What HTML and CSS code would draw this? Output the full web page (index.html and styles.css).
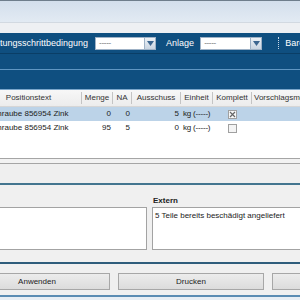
FILE: index.html
```html
<!DOCTYPE html>
<html>
<head>
<meta charset="utf-8">
<link rel="stylesheet" href="styles.css">
</head>
<body>
<div class="app">
  <div class="titlebar"></div>
  <div class="menustrip"></div>
  <div class="toolbar">
    <span class="tb-label first">Bearbeitungsschrittbedingung</span>
    <div class="combo c1"><span class="combo-text">-----</span><span class="combo-btn"><svg width="7" height="5" viewBox="0 0 7 5"><path d="M0 0h7L3.5 5z" fill="#3d6690"/></svg></span></div>
    <span class="tb-label anlage">Anlage</span>
    <div class="combo c2"><span class="combo-text">-----</span><span class="combo-btn"><svg width="7" height="5" viewBox="0 0 7 5"><path d="M0 0h7L3.5 5z" fill="#3d6690"/></svg></span></div>
    <span class="tb-sep"></span>
    <span class="tb-label barc">Barcode</span>
  </div>
  <div class="band band1"></div>
  <div class="band band2"></div>
  <div class="table">
    <div class="row head">
      <div class="cell h pos">Positionstext</div>
      <div class="cell h">Menge</div>
      <div class="cell h">NA</div>
      <div class="cell h">Ausschuss</div>
      <div class="cell h">Einheit</div>
      <div class="cell h">Komplett</div>
      <div class="cell h last">Vorschlagsmenge</div>
    </div>
    <div class="row sel">
      <div class="cell txt">Schraube 856954 Zink</div>
      <div class="cell num">0</div>
      <div class="cell num">0</div>
      <div class="cell num">5</div>
      <div class="cell unit">kg (-----)</div>
      <div class="cell chk"><span class="box checked"><svg width="7" height="7" viewBox="0 0 7 7"><path d="M1 1L6 6M6 1L1 6" stroke="#666" stroke-width="1.2"/></svg></span></div>
      <div class="cell"></div>
    </div>
    <div class="row">
      <div class="cell txt">Schraube 856954 Zink</div>
      <div class="cell num">95</div>
      <div class="cell num">5</div>
      <div class="cell num">0</div>
      <div class="cell unit">kg (-----)</div>
      <div class="cell chk"><span class="box"></span></div>
      <div class="cell"></div>
    </div>
  </div>
  <div class="splitter"></div>
  <div class="strip"></div>
  <div class="panel">
    <div class="notes">
      <div class="note left">
        <div class="note-label">Intern</div>
        <div class="note-box"></div>
      </div>
      <div class="note right">
        <div class="note-label">Extern</div>
        <div class="note-box">5 Teile bereits beschädigt angeliefert</div>
      </div>
    </div>
  </div>
  <div class="buttons">
    <button class="btn first">Anwenden</button>
    <button class="btn">Drucken</button>
    <button class="btn">Schließen</button>
  </div>
  <div class="footer"></div>
</div>
</body>
</html>
```

FILE: styles.css
```css
html, body {
  margin: 0;
  padding: 0;
}
body {
  width: 300px;
  height: 300px;
  overflow: hidden;
  background: #f0f0f0;
  font-family: "Liberation Sans", Arial, sans-serif;
  font-size: 8px;
  color: #222;
}
.app {
  display: flex;
  flex-direction: column;
  width: 300px;
  height: 300px;
  overflow: hidden;
}
.titlebar {
  height: 21px;
  flex: none;
  border-top: 1px solid #6f7e8c;
  background: linear-gradient(#d3dfec, #e2eaf3);
}
.menustrip {
  height: 10px;
  flex: none;
  border-top: 1px solid #d2d9e1;
  background: #eef0f3;
}
.toolbar {
  height: 20px;
  flex: none;
  display: flex;
  align-items: center;
  background: #0f4f80;
  color: #fff;
  font-size: 9px;
  white-space: nowrap;
}
.toolbar > * { flex: none; }
.tb-label.first { margin-left: -31px; }
.combo {
  display: flex;
  height: 13px;
  background: #fff;
  border: 1px solid #9fb2c6;
  box-sizing: border-box;
  margin-left: 7px;
  width: 61px;
}
.combo.c2 { margin-left: 6px; width: 62px; }
.combo-text {
  flex: 1;
  color: #666;
  font-size: 8px;
  line-height: 10px;
  padding-left: 3px;
  letter-spacing: -0.3px;
}
.combo-btn {
  width: 10px;
  display: flex;
  align-items: center;
  justify-content: center;
  background: linear-gradient(#eef2f6, #c9d5e2);
  border-left: 1px solid #9fb2c6;
}
.tb-label.anlage { margin-left: 10px; }
.tb-sep {
  margin-left: 16px;
  width: 0;
  height: 12px;
  border-left: 1px dotted #c8d8e8;
}
.tb-label.barc { margin-left: 6px; }
.band {
  flex: none;
  background: #0f4f80;
}
.band1 {
  height: 15px;
  border-top: 1px solid #0a3e66;
  border-bottom: 1px solid #5f96c2;
}
.band2 {
  height: 19px;
  border-bottom: 1px solid #7aa7cc;
}
.table {
  flex: none;
  height: 68px;
  background: #fff;
  margin-left: -13px;
  width: 330px;
}
.row {
  display: grid;
  grid-template-columns: 95px 31px 19px 49px 32px 39px 65px;
  height: 14px;
  align-items: center;
}
.row.head {
  height: 17px;
  background: linear-gradient(#f7f7f7, #ececec);
  border-bottom: 1px solid #d6d6d6;
  box-sizing: border-box;
}
.cell {
  overflow: hidden;
  white-space: nowrap;
  padding: 0 2px;
  box-sizing: border-box;
  line-height: 14px;
}
.cell.h {
  text-align: center;
  color: #333;
  border-right: 1px solid #c4c4c4;
  line-height: 12px;
}
.cell.h.pos { padding-right: 13px; }
.cell.h.last { border-right: none; text-align: left; }
.row.sel {
  background: #bcd3e8;
}
.cell.txt { padding-left: 1px; }
.cell.num { text-align: right; padding-right: 2px; }
.cell.unit { padding-left: 2px; overflow: visible; letter-spacing: -0.2px; }
.cell.chk {
  display: flex;
  justify-content: center;
  align-items: center;
  height: 14px;
}
.box {
  width: 9px;
  height: 9px;
  border: 1px solid #a0a0a0;
  box-sizing: border-box;
  background: #f4f4f4;
  display: flex;
  align-items: center;
  justify-content: center;
}
.box.checked { background: #f8f8f8; }
.splitter {
  flex: none;
  height: 4px;
  border-top: 1px solid #a5a5a5;
  border-bottom: 1px solid #a5a5a5;
  background: #f2f2f2;
}
.strip {
  flex: none;
  height: 19px;
  background: #efefef;
  border-bottom: 2px solid #43758f;
}
.panel {
  flex: none;
  height: 77px;
  border-bottom: 2px solid #2f5d7c;
  background: #f0f0f0;
}
.notes {
  display: flex;
  gap: 5px;
  margin-left: -60px;
  padding-top: 10px;
  width: 400px;
}
.note { display: flex; flex-direction: column; flex: none; }
.note.left { width: 207px; }
.note.right { width: 160px; }
.note-label {
  font-weight: bold;
  height: 12px;
  line-height: 12px;
  padding-left: 1px;
  color: #222;
}
.note-box {
  height: 43px;
  background: #fff;
  border: 1px solid #a3a3a3;
  padding: 3px 2px;
  box-sizing: border-box;
  line-height: 10px;
  white-space: nowrap;
}
.buttons {
  flex: none;
  display: flex;
  gap: 8px;
  padding-top: 9px;
  height: 22px;
  margin-left: -36px;
  width: 460px;
}
.btn {
  width: 146px;
  height: 17px;
  flex: none;
  margin: 0;
  padding: 0;
  font-family: "Liberation Sans", Arial, sans-serif;
  font-size: 8px;
  color: #222;
  border: 1px solid #a7a7a7;
  background: linear-gradient(#ececec, #dcdcdc);
  box-sizing: border-box;
}
.footer {
  flex: 1;
  border-top: 2px solid #5b8cb3;
  background: #e8eef4;
}
```
